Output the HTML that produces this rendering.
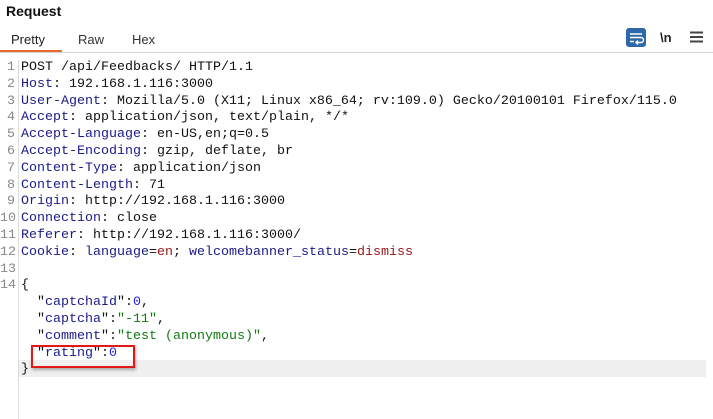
<!DOCTYPE html>
<html><head><style>
body{margin:0;width:713px;height:418px;background:#fff;overflow:hidden;font-family:"Liberation Sans","DejaVu Sans",sans-serif;position:relative}
.title{position:absolute;left:6px;top:3px;font-weight:bold;font-size:14px;color:#111}
.tab{position:absolute;top:32px;font-size:13px;color:#333}
.ul{position:absolute;left:0;top:50px;width:62px;height:2px;background:#e8692c}
.sep{position:absolute;left:0;top:52px;width:713px;height:1px;background:#cfd6d6}
.code{position:absolute;left:0;top:60px;font-family:"Liberation Mono","DejaVu Sans Mono",monospace;font-size:13.33px;line-height:16.8px}
.ln{display:flex;height:16.8px;white-space:pre}
.n{width:15px;text-align:right;color:#888;padding-right:3px;border-right:1px solid #ddd}
.t{padding-left:2px;color:#111}
.k{color:#1a1a8a}.r{color:#9a1515}.b{color:#2222ee}.g{color:#117a11}
.hl{position:absolute;left:19px;top:360px;width:687px;height:17px;background:#efefef}
.box{position:absolute;left:31px;top:345px;width:100px;height:19px;border:2px solid #e01818;box-shadow:1px 2px 3px rgba(0,0,0,.3)}
</style></head><body>
<div class="title">Request</div>
<div class="tab" style="left:11px;color:#222">Pretty</div>
<div class="tab" style="left:78px">Raw</div>
<div class="tab" style="left:132px">Hex</div>
<div class="ul"></div><div class="sep"></div>
<svg style="position:absolute;left:626px;top:28px" width="20" height="19"><rect width="20" height="19" rx="3" fill="#2f68a8"/><path d="M4 6h12M4 9.5h11a2.5 2.5 0 0 1 0 5h-4M12 12.5l-2 2 2 2M4 13.5h4" stroke="#fff" stroke-width="1.4" fill="none"/></svg>
<div style="position:absolute;left:660px;top:30px;font-size:13px;font-weight:bold;color:#222">\n</div>
<svg style="position:absolute;left:690px;top:31px" width="13" height="12"><path d="M0 1.5h13M0 6h13M0 10.5h13" stroke="#444" stroke-width="2"/></svg>
<div class="hl"></div>
<div class="code">
<div class="ln"><span class="n">1</span><span class="t">POST /api/Feedbacks/ HTTP/1.1</span></div>
<div class="ln"><span class="n">2</span><span class="t"><span class="k">Host</span>: 192.168.1.116:3000</span></div>
<div class="ln"><span class="n">3</span><span class="t"><span class="k">User-Agent</span>: Mozilla/5.0 (X11; Linux x86_64; rv:109.0) Gecko/20100101 Firefox/115.0</span></div>
<div class="ln"><span class="n">4</span><span class="t"><span class="k">Accept</span>: application/json, text/plain, */*</span></div>
<div class="ln"><span class="n">5</span><span class="t"><span class="k">Accept-Language</span>: en-US,en;q=0.5</span></div>
<div class="ln"><span class="n">6</span><span class="t"><span class="k">Accept-Encoding</span>: gzip, deflate, br</span></div>
<div class="ln"><span class="n">7</span><span class="t"><span class="k">Content-Type</span>: application/json</span></div>
<div class="ln"><span class="n">8</span><span class="t"><span class="k">Content-Length</span>: 71</span></div>
<div class="ln"><span class="n">9</span><span class="t"><span class="k">Origin</span>: http://192.168.1.116:3000</span></div>
<div class="ln"><span class="n">10</span><span class="t"><span class="k">Connection</span>: close</span></div>
<div class="ln"><span class="n">11</span><span class="t"><span class="k">Referer</span>: http://192.168.1.116:3000/</span></div>
<div class="ln"><span class="n">12</span><span class="t"><span class="k">Cookie</span>: <span class="k">language</span>=<span class="r">en</span>; <span class="k">welcomebanner_status</span>=<span class="r">dismiss</span></span></div>
<div class="ln"><span class="n">13</span><span class="t"></span></div>
<div class="ln"><span class="n">14</span><span class="t">{</span></div>
<div class="ln"><span class="n"></span><span class="t">  "<span class="k">captchaId</span>":<span class="b">0</span>,</span></div>
<div class="ln"><span class="n"></span><span class="t">  "<span class="k">captcha</span>":<span class="g">"-11"</span>,</span></div>
<div class="ln"><span class="n"></span><span class="t">  "<span class="k">comment</span>":<span class="g">"test (anonymous)"</span>,</span></div>
<div class="ln"><span class="n"></span><span class="t">  "<span class="k">rating</span>":<span class="b">0</span></span></div>
<div class="ln"><span class="n"></span><span class="t">}</span></div>
<div class="ln" style="height:40px"><span class="n"></span></div>
</div>
<div class="box"></div>
</body></html>
